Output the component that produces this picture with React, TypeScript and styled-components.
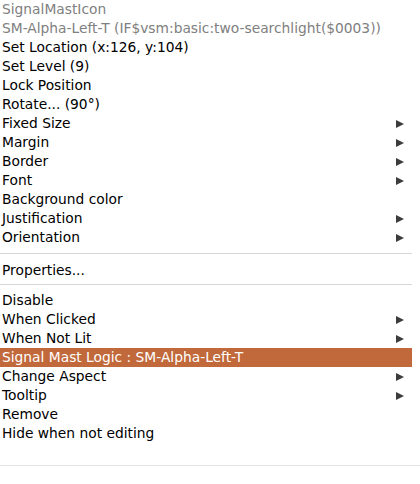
import React from "react";
import styled, { createGlobalStyle } from "styled-components";

const Global = createGlobalStyle`
  html, body { margin: 0; padding: 0; background: #ffffff; }
  body { font-family: "DejaVu Sans", "Liberation Sans", sans-serif; }
`;

const Page = styled.div`
  width: 420px;
  height: 484px;
  background: #ffffff;
  display: flex;
  flex-direction: column;
`;

const Menu = styled.div`
  width: 412px;
  display: flex;
  flex-direction: column;
`;

const Item = styled.div<{ $header?: boolean; $active?: boolean }>`
  height: 19px;
  line-height: 19px;
  padding: 0 8px 0 2px;
  display: flex;
  align-items: center;
  justify-content: space-between;
  font-size: 13.8px;
  white-space: nowrap;
  color: ${(p) => (p.$active ? "#ffffff" : p.$header ? "#808080" : "#000000")};
  background: ${(p) => (p.$active ? "#c1693b" : "transparent")};
`;

const Arrow = styled.span`
  width: 0;
  height: 0;
  border-left: 8px solid #3c3c3c;
  border-top: 4.5px solid transparent;
  border-bottom: 4.5px solid transparent;
`;

const Separator = styled.div<{ $above: number; $below: number }>`
  height: 1px;
  background: #d6d6d6;
  margin: ${(p) => p.$above}px 0 ${(p) => p.$below}px 0;
`;

const BottomRule = styled.div`
  height: 1px;
  width: 420px;
  background: #e2e2e2;
  margin-top: 22px;
`;

type Entry = { label: string; sub?: boolean; header?: boolean; active?: boolean };

const groupA: Entry[] = [
  { label: "SignalMastIcon", header: true },
  { label: "SM-Alpha-Left-T (IF$vsm:basic:two-searchlight($0003))", header: true },
  { label: "Set Location (x:126, y:104)" },
  { label: "Set Level (9)" },
  { label: "Lock Position" },
  { label: "Rotate... (90°)" },
  { label: "Fixed Size", sub: true },
  { label: "Margin", sub: true },
  { label: "Border", sub: true },
  { label: "Font", sub: true },
  { label: "Background color" },
  { label: "Justification", sub: true },
  { label: "Orientation", sub: true },
];

const groupB: Entry[] = [{ label: "Properties..." }];

const groupC: Entry[] = [
  { label: "Disable" },
  { label: "When Clicked", sub: true },
  { label: "When Not Lit", sub: true },
  { label: "Signal Mast Logic : SM-Alpha-Left-T", active: true },
  { label: "Change Aspect", sub: true },
  { label: "Tooltip", sub: true },
  { label: "Remove" },
  { label: "Hide when not editing" },
];

const renderItems = (items: Entry[]) =>
  items.map((e) => (
    <Item key={e.label} $header={e.header} $active={e.active}>
      <span>{e.label}</span>
      {e.sub && <Arrow />}
    </Item>
  ));

export default function App() {
  return (
    <Page>
      <Global />
      <Menu>
        {renderItems(groupA)}
        <Separator $above={6} $below={7} />
        {renderItems(groupB)}
        <Separator $above={4} $below={6} />
        {renderItems(groupC)}
      </Menu>
      <BottomRule />
    </Page>
  );
}
